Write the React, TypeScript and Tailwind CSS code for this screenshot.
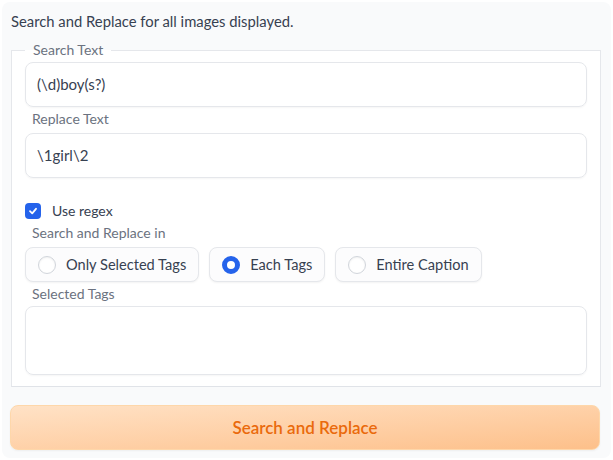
import { useState } from "react"

const OPTIONS = ["Only Selected Tags", "Each Tags", "Entire Caption"]

function Radio({ checked }: { checked: boolean }) {
  return checked ? (
    <span className="w-[18px] h-[18px] rounded-full border-[5px] border-[#2563eb] bg-white" />
  ) : (
    <span className="w-[18px] h-[18px] rounded-full border border-[#d1d5db] bg-white shadow-[inset_0_1px_2px_rgba(0,0,0,0.06)]" />
  )
}

export default function App() {
  const [choice, setChoice] = useState(1)
  const [regex, setRegex] = useState(true)

  return (
    <div className="w-[613px] h-[460px] bg-white p-[2px]" style={{ fontFamily: "Lato, 'Noto Sans', sans-serif" }}>
      <div className="h-[456px] rounded-[8px] bg-[#f9fafb] px-[8px] pt-[8px] flex flex-col">
        <div className="text-[14.8px] leading-[22px] text-[#374151] ml-[1px]">
          Search and Replace for all images displayed.
        </div>

        <fieldset className="mt-[9px] ml-[1px] w-[590px] border border-[#e5e7eb] border-b-[#e0e3e8] bg-white px-[13px] pb-[11px]">
          <legend className="px-[8px] text-[14px] leading-[18px] text-[#6b7280]">Search Text</legend>

          <div className="mt-[3px] h-[45px] rounded-[8px] border border-[#e5e7eb] shadow-[0_1px_2px_rgba(0,0,0,0.04)] flex items-center px-[11px] text-[15px] text-[#374151]">
            (\d)boy(s?)
          </div>

          <div className="mt-[3px] ml-[7px] text-[14px] leading-[18px] text-[#6b7280]">Replace Text</div>
          <div className="mt-[5px] h-[45px] rounded-[8px] border border-[#e5e7eb] shadow-[0_1px_2px_rgba(0,0,0,0.04)] flex items-center px-[11px] text-[15px] text-[#374151]">
            \1girl\2
          </div>

          <button
            onClick={() => setRegex(!regex)}
            className="mt-[25px] flex items-center gap-[11px] text-[14px] leading-[16px] text-[#374151]"
          >
            <span className={`w-[16px] h-[16px] rounded-[4px] flex items-center justify-center ${regex ? "bg-[#2563eb]" : "bg-white border border-[#d1d5db]"}`}>
              {regex && (
                <svg width="10" height="10" viewBox="0 0 10 10" fill="none">
                  <path d="M2 5.2 L4.2 7.3 L8 2.8" stroke="white" strokeWidth="1.8" strokeLinecap="round" strokeLinejoin="round" />
                </svg>
              )}
            </span>
            Use regex
          </button>

          <div className="mt-[5px] ml-[7px] text-[14px] leading-[18px] text-[#6b7280]">Search and Replace in</div>
          <div className="mt-[5px] flex gap-[10px]">
            {OPTIONS.map((o, i) => (
              <button
                key={o}
                onClick={() => setChoice(i)}
                className="h-[35px] rounded-[8px] border border-[#e5e7eb] bg-[#fcfcfd] shadow-[0_1px_2px_rgba(0,0,0,0.05)] flex items-center gap-[10px] pl-[12px] pr-[12px] text-[14.6px] text-[#374151]"
              >
                <Radio checked={choice === i} />
                {o}
              </button>
            ))}
          </div>

          <div className="mt-[3px] ml-[7px] text-[14px] leading-[18px] text-[#6b7280]">Selected Tags</div>
          <div className="mt-[3px] h-[69px] rounded-[8px] border border-[#e5e7eb] shadow-[0_1px_2px_rgba(0,0,0,0.04)]" />
        </fieldset>

        <button className="mt-[18px] h-[45px] w-[590px] rounded-[8px] border border-[#fed7aa] bg-gradient-to-br from-[#ffe2c6] to-[#fdc08a] text-[17px] font-semibold text-[#ea6a0c] shadow-[0_1px_2px_rgba(0,0,0,0.05)]">
          Search and Replace
        </button>
      </div>
    </div>
  )
}
